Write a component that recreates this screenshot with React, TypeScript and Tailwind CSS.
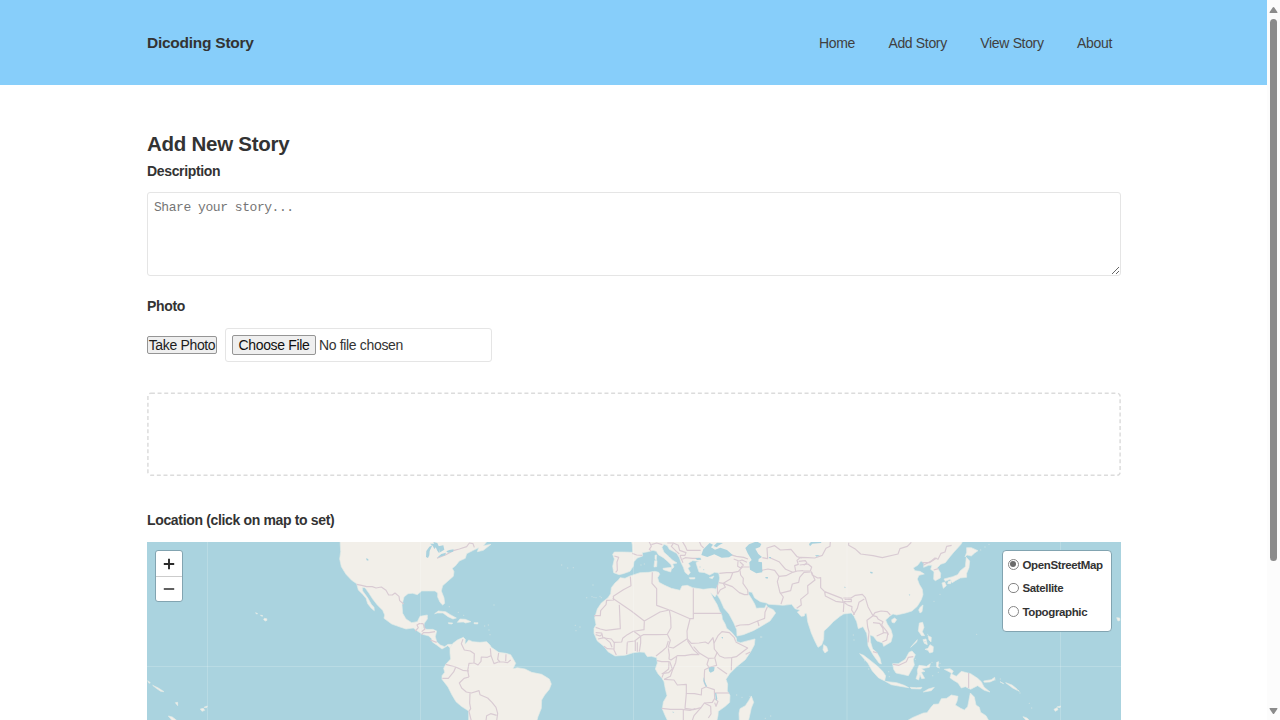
import React from "react";

// Coastline and border data: each part is a horizontal tile offset and "x,y" points inside that tile.
type Part = [number, string];

const A = 840;
const B = 1320;
const C = 1800;
const D = 2160;

function pts(parts: Part[]): string {
  return parts
    .map(([dx, s]) =>
      s
        .trim()
        .split(/\s+/)
        .map((p) => {
          const [x, y] = p.split(",").map(Number);
          return `${x + dx},${y}`;
        })
        .join(" ")
    )
    .join(" ");
}

const LAND: Part[][] = [
  // North and Central America
  [[A, "-240,15 -238,50 -241,72 -236,95 -222,118 -205,136 -190,146 -185,165 -172,178 -162,190 -157,206 -146,220 -137,227 -138,217 -146,208 -156,190 -163,180 -172,168 -173,158 -165,158 -153,175 -142,192 -128,210 -112,226 -106,240 -108,250 -85,267 -60,276 -42,282 -20,279 -5,290 8,298 26,303 35,311 37,321 50,330 66,342 75,337 83,332 92,340 97,328 84,328 74,335 61,330 50,320 46,305 50,288 38,283 20,283 10,279 13,265 22,252 22,240 0,244 -8,260 -25,263 -42,252 -52,235 -54,210 -48,186 -36,176 -22,175 -8,179 5,168 25,168 45,168 53,174 53,186 60,202 68,210 74,205 72,188 64,168 68,152 84,138 100,124 102,110 97,100 106,93 118,78 136,70 140,56 160,46 176,38 172,50 190,46 213,28 190,32 205,15"]],
  // South America
  [[A, "90,338 99,325 112,315 130,307 136,313 135,328 141,322 146,315 158,320 180,322 200,320 210,330 214,337 236,352 258,355 272,359 281,374 287,385 279,401 292,398 315,402 335,412 365,418 388,432 394,447 388,463 374,480 365,495 364,520 354,545 350,560 146,560 146,528 124,514 108,500 96,480 84,456 66,433 66,422 74,412 71,400 78,387 92,372 90,355"]],
  // Africa
  [[B, "120,128 135,130 150,123 180,113 206,112 225,109 236,112 239,118 233,128 237,142 254,151 274,160 300,166 306,153 322,151 338,158 370,163 396,160 408,162 411,176 405,186 392,173 400,190 411,208 418,226 426,242 427,252 436,268 440,280 455,292 469,309 470,320 482,323 504,317 525,312 523,330 512,350 496,374 470,395 449,416 438,433 443,447 442,468 450,481 449,502 436,514 415,529 414,542 410,560 264,560 256,543 247,522 250,501 261,482 256,462 252,440 246,430 234,416 226,402 232,384 230,368 214,364 202,365 193,352 178,351 160,353 135,361 105,363 84,350 73,335 52,318 42,295 42,280 48,269 44,248 52,222 64,204 84,188 92,176 94,158 105,144 116,134"]],
  // Europe and Asia
  [
    [B, "154,15 157,30 158,52 130,51 103,51 98,58 103,72 98,94 101,113 117,119 130,116 150,109 160,94 162,80 172,69 188,63 187,53 205,50 219,46 229,49 235,59 250,68 265,81 273,89 277,101 282,96 278,87 291,84 277,75 267,65 252,52 246,37 252,28 262,32 268,43 290,55 298,68 304,85 310,97 315,112 325,120 331,113 324,100 331,94 325,85 338,77 356,79 348,83 352,96 357,111 374,113 389,120 404,112 416,114 419,129 415,150 407,164 412,180 421,195 432,220 447,237 461,263 470,284 471,303 490,299 520,287 540,276 570,258 587,234 580,224 562,216 559,209 554,219 540,219 529,220 524,207 514,190 506,178 505,170 516,172 524,189 541,200 559,204 566,208 585,209 610,211"],
    [C, "155,208 165,221 180,226 172,231 183,244 193,243 195,235 200,236 203,260 214,294 224,317 234,337 245,330 251,313 252,288 266,275 280,260 300,244 311,237 334,234 342,244 350,260 355,281 369,275 380,295 383,315 384,332 393,349 401,362 417,384 424,387 420,369 410,352 398,342 392,322 390,300 400,304 411,318 428,324 431,334 453,321 458,302 453,284 442,267 437,255 449,244 459,237 470,240 497,234 516,228 532,214 544,194 549,179 547,163 538,148 532,132 537,121 553,117 540,109 525,107 520,99 533,91 543,78 552,83 551,97 566,91 576,91 572,103 582,110 581,133"],
    [D, "226,137 241,129 242,115 232,98 242,88 256,83 270,65 282,51 303,28 310,15"],
  ],
  // Mediterranean islands
  [[B, "249,100 276,97 272,111 250,104"]],
  [[B, "224,77 231,77 230,95 222,96"]],
  [[B, "225,61 230,60 229,75 225,73"]],
  [[B, "328,128 345,128 344,132 330,132"]],
  [[B, "388,128 402,123 397,131"]],
  // Caribbean
  [[A, "44,236 55,228 77,230 91,239 109,249 99,252 84,245 69,234 52,234"]],
  [[A, "112,262 120,252 136,253 153,260 137,264 130,261"]],
  [[A, "85,263 98,264 96,267 86,266"]],
  [[A, "162,263 174,263 173,267 162,266"]],
  // Madagascar
  [[B, "478,560 477,535 480,521 496,512 506,497 514,483 521,502 514,519 505,560"]],
  // Sri Lanka
  [[C, "251,329 260,335 264,347 255,354 249,345"]],
  // Sumatra
  [[C, "359,356 371,361 392,377 413,394 428,409 437,422 434,438 415,428 397,408 384,385"]],
  // Java and the lesser islands
  [[C, "436,439 450,441 470,443 493,451 506,458 480,454 454,449"]],
  [[C, "510,457 530,458 546,457 542,462 514,461"]],
  [[C, "550,471 565,462 583,457 574,467"]],
  // Borneo
  [[C, "458,386 475,386 496,373 507,352 516,348 526,359 520,374 523,390 514,406 505,422 486,418 468,414 461,403"]],
  // Sulawesi
  [[C, "532,405 537,391 560,394 571,386 568,397 545,401 555,409 544,412 554,430 545,431 540,419 536,435 528,431 533,416"]],
  // Philippines
  [[C, "538,264 548,262 552,277 547,290 554,302 545,302 535,288"]],
  [[C, "555,343 564,340 570,329 580,335 579,351 569,354 564,346"]],
  [[C, "549,314 558,312 562,329 553,325"]],
  [[C, "564,302 574,307 573,321 567,315"]],
  [[C, "512,337 532,314 530,321"]],
  // Taiwan and Hainan
  [[C, "541,216 549,210 546,230 540,234 536,225"]],
  [[C, "455,254 464,249 470,254 463,264 456,262"]],
  // Japan
  [[D, "320,38 334,38 354,47 344,54 334,63 321,60 315,66 320,52"]],
  [[D, "319,67 329,78 327,98 320,115 320,127 301,129 286,137 277,143 270,133 256,139 252,132 278,125 293,119 301,107 316,95"]],
  [[D, "246,144 254,141 259,152 250,160"]],
  [[D, "265,139 275,137 272,146 263,146"]],
  // New Guinea
  [[D, "253,403 270,401 280,408 275,417 289,424 304,409 332,416 353,430 364,440 372,456 390,471 373,466 353,452 341,458 332,463 316,455 304,459 294,444 279,435 270,428 274,414"]],
  [[D, "371,438 394,434 404,427 405,434 390,441 373,442"]],
  [[D, "230,382 236,380 234,394 239,399 230,396"]],
  [[D, "420,440 431,446 426,444"]],
  // Australia
  [[D, "137,560 157,548 190,534 201,533 213,517 221,508 236,507 244,491 260,490 274,480 294,484 291,499 286,510 302,520 313,525 323,515 331,474 343,486 348,510 358,517 362,532 378,542 388,560"]],
  // Hawaii and Pacific specks
  [[0, "373,250 380,251 381,256 376,258 371,254"]],
  [[0, "347,233 353,236 349,237"]],
  [[0, "362,240 369,243 363,243"]],
  [[0, "181,522 190,520 194,526 186,529"]],
  [[0, "192,517 202,513 200,518"]],
  [[0, "106,503 113,502 113,512"]],
  [[0, "85,543 97,546 110,556 99,560"]],
  [[0, "23,437 31,443 27,445"]],
  [[0, "38,451 55,459 72,470 62,469 49,460"]],
  [[D, "582,523 591,518 594,524 586,529"]],
  [[D, "591,516 602,513 600,518"]],
  [[D, "437,443 456,450 471,462 478,469 458,459"]],
  [[D, "489,545 501,549 512,560 498,556"]],
  [[D, "770,248 779,249 780,256 774,258"]],
];

const WATER: Part[][] = [
  // Black Sea
  [[B, "364,60 370,43 382,31 389,24 399,29 393,37 405,44 421,38 441,45 458,60 447,67 425,68 403,58 382,66"]],
  [[B, "401,33 411,23 429,24 417,31 410,37"]],
  [[B, "346,70 361,68 364,74 351,75"]],
  // Caspian Sea
  [[B, "496,39 507,28 530,19 544,27 540,36 526,41 535,57 546,66 536,72 535,80 546,82 547,112 529,115 510,104 508,82 515,75 503,55"]],
  [[C, "207,27 214,20 245,20 243,24 217,26 210,34"]],
  [[C, "225,61 240,60 230,65"]],
  [[C, "86,66 93,66 93,70 88,70"]],
  [[C, "76,126 84,126 83,131 77,130"]],
  [[C, "390,110 398,111 397,116 391,114"]],
  [[C, "506,178 511,179 509,182"]],
  [[C, "312,155 317,156 315,160"]],
  // Great Lakes
  [[A, "18,66 19,48 28,35 37,31 29,48 28,61 24,69"]],
  [[A, "30,26 44,26 55,34 70,31 73,44 58,53 60,42 48,36 43,42 38,32"]],
  [[A, "51,68 64,57 78,53 75,61"]],
  [[A, "79,49 88,45 101,43 99,50 84,53"]],
  [[A, "40,21 52,24 60,42 57,54 52,47"]],
  [[0, "678,70 685,72 685,77 680,76"]],
  // Lake Victoria and rift lakes
  [[B, "386,399 394,395 404,397 402,408 392,413 387,409"]],
  [[B, "371,426 374,438 381,454 378,456 370,438"]],
  [[B, "405,474 409,475 412,492 408,497"]],
  [[B, "424,306 429,306 428,312"]],
  [[B, "276,530 283,531 280,533"]],
];

const BORDERS: Part[][] = [
  // Americas
  [[0, "650,148 665,151 680,155 697,155 708,159 724,156 738,166 746,180 757,180 765,174 777,184 779,197 791,207"]],
  [[0, "826,288 835,278 831,270 837,266 849,266 855,282 845,290"]],
  [[0, "845,300 850,293 867,293 885,290"]],
  [[0, "871,315 890,322"]],
  [[A, "51,70 76,60 100,47 118,42 140,35 148,24 159,26 163,37"]],
  [[A, "129,313 124,326 133,345 151,348 163,356 162,384 147,385 143,407 147,426"]],
  [[A, "77,388 107,396 128,406 147,408"]],
  [[A, "67,430 85,430 101,411 107,397"]],
  [[A, "147,426 132,430 118,444 125,459 139,471 154,474 177,467 180,479 203,489 216,502 228,517 233,535 230,557"]],
  [[A, "150,475 149,505 152,521 147,529 154,558"]],
  [[A, "198,557 200,542 212,536 230,541"]],
  [[A, "163,384 174,390 183,379 184,366 202,367 213,362 211,340"]],
  [[A, "213,362 222,386 235,381 250,381 263,383 272,375"]],
  [[A, "236,354 233,373 240,381"]],
  [[A, "258,358 257,379"]],
  // Iberia and Europe
  [[B, "103,63 116,67 111,81 112,106 107,112"]],
  [[B, "157,55 170,60 187,61"]],
  [[B, "207,19 214,34 208,43 213,47"]],
  [[B, "214,29 230,24 247,29"]],
  [[B, "262,24 280,24 295,31 299,46 318,53 315,61 300,61"]],
  [[B, "280,25 274,34 289,49 298,57"]],
  [[B, "307,19 316,34 321,46 346,46 362,46"]],
  [[B, "307,73 316,68 337,70 357,70"]],
  [[B, "300,61 304,72 309,83"]],
  [[B, "358,19 363,31 371,39"]],
  [[B, "449,58 469,64 491,67 504,72"]],
  [[B, "461,72 477,78 486,75 501,82"]],
  [[B, "418,115 440,113 458,113 475,109 487,96 509,96"]],
  [[B, "474,79 473,94 482,99 490,90 480,81"]],
  [[B, "458,114 451,132 430,145 416,143"]],
  [[B, "480,106 482,120 490,130 489,145 503,165 504,178"]],
  [[B, "430,145 436,157 421,164 413,178"]],
  [[B, "430,145 457,155 478,173 493,179 505,179"]],
  [[B, "412,149 413,178"]],
  [[B, "467,274 480,270 506,269 533,258 537,273"]],
  [[B, "533,258 554,250 555,232 562,216"]],
  // Central and south Asia
  [[C, "65,106 84,102 104,106 117,124 112,140 120,173 130,186 123,207"]],
  [[C, "67,68 83,71 81,39 104,32 121,45 153,43 171,65 185,69"]],
  [[C, "90,68 117,80 137,103 158,112 172,108 190,107"]],
  [[C, "117,124 138,122 158,112"]],
  [[C, "120,175 152,167 157,147 176,142 179,127 192,112 212,111"]],
  [[C, "167,108 164,92 175,88 171,76 181,67 204,68 224,69 247,61 258,40 270,34 271,20"]],
  [[C, "190,108 211,108 215,96 204,87 179,90"]],
  [[C, "176,79 196,77 201,84 191,91"]],
  [[C, "214,110 217,120 233,129 242,128 242,158 254,170"]],
  [[C, "214,110 225,135 203,152 204,175 182,193 184,210 170,220"]],
  [[C, "254,170 277,179 306,190 310,202 287,199 256,183 254,170"]],
  [[C, "310,189 333,189 346,181 367,178 376,188 384,215 399,242"]],
  [[C, "314,193 334,193 334,200 312,200 310,231"]],
  [[C, "312,202 323,210 336,215 335,225 344,239"]],
  [[C, "340,240 352,220 357,202 373,192"]],
  [[C, "399,242 381,256 383,276 387,291 384,322"]],
  [[C, "399,242 405,233 423,228 442,230 451,240"]],
  [[C, "399,242 410,245 415,253 429,260 425,270 441,290 445,300"]],
  [[C, "399,263 419,265 429,280 430,294 410,303"]],
  [[C, "430,293 444,294 440,315 427,321"]],
  [[C, "399,350 412,354"]],
  [[C, "326,23 326,31 347,43 362,57 399,62 427,68 474,57 480,41 502,34 514,22"]],
  [[C, "547,83 568,83 590,69"]],
  [[D, "190,91 215,77 225,69 234,73 243,55 255,51 260,34 275,31"]],
  [[D, "221,105 235,101"]],
  [[D, "326,414 326,459"]],
  [[C, "459,388 477,391 499,380 505,367 520,365"]],
  // Africa
  [[B, "151,125 153,152 130,164 100,184 101,195 80,196 78,209 62,227 61,242 42,242"]],
  [[B, "98,190 154,228 193,258 240,231 268,225 230,211 230,161 216,145 217,112"]],
  [[B, "118,209 121,281 78,286 61,282 47,277"]],
  [[B, "340,160 340,235 425,235"]],
  [[B, "270,225 330,251 340,251 340,235"]],
  [[B, "268,225 272,248 273,278 262,298 231,299 190,299 183,303"]],
  [[B, "193,259 192,284 166,288 160,289 142,299 128,310 125,321 102,322 94,312 74,309"]],
  [[B, "330,252 321,288 322,311 280,339 265,336 271,316 262,298"]],
  [[B, "322,312 334,325 357,324 376,321 385,326 399,308 402,325"]],
  [[B, "402,325 414,302 426,290 448,293 463,308 467,320"]],
  [[B, "402,325 403,342 419,363 434,369 455,368 469,365 503,339 467,321"]],
  [[B, "455,368 454,406"]],
  [[B, "322,316 341,345 357,359 336,358 315,362 292,362 273,375 267,372 268,360 265,340"]],
  [[B, "341,335 359,355 384,370 404,369 412,351"]],
  [[B, "405,370 410,391 386,398 374,404 373,421 373,444 379,455"]],
  [[B, "387,397 381,388 386,372"]],
  [[B, "412,397 441,417"]],
  [[B, "379,455 365,461 364,480 344,476 319,475 319,448 292,450 282,435 252,433"]],
  [[B, "379,456 403,464 404,490 397,502 373,504 363,518 340,524 315,520 319,475"]],
  [[B, "245,520 271,523 306,523 330,526 346,521"]],
  [[B, "310,524 310,559"]],
  [[B, "363,518 342,542 336,559"]],
  [[B, "373,504 392,514 393,537 385,549"]],
  [[B, "403,474 447,474"]],
  [[B, "404,491 414,499 408,514 404,503"]],
  [[B, "231,377 245,380 267,380 266,402 251,414 246,428"]],
  [[B, "290,365 287,383 278,404 271,424 253,433"]],
  [[B, "269,379 277,402 266,413 245,416"]],
  [[B, "265,318 259,337 247,348 228,363"]],
  [[B, "182,304 182,324 178,350"]],
  [[B, "166,318 166,348"]],
  [[B, "172,322 172,350"]],
  [[B, "142,322 140,357"]],
  [[B, "142,321 164,318 182,304 163,290"]],
  [[B, "103,322 102,345 109,360"]],
  [[B, "102,342 82,341 72,334"]],
  [[B, "54,312 73,308 90,322 96,337"]],
  [[B, "47,293 65,294 69,309"]],
  [[B, "47,299 60,303 66,298"]],
  [[B, "497,358 511,351"]],
];

const SPECKS: Part[] = [
  [A, "425,90 443,99 460,98 519,150 516,185 528,188 540,184 466,271 480,276 468,287 205,270 207,285 210,299 194,273 88,215 115,232 131,241 222,210"],
  [B, "20,188 42,187 64,188 545,306 470,480 486,487 510,484 183,90 193,87 371,104 360,96"],
  [C, "62,306 76,550 92,543 340,300 342,315 600,385 563,298 448,425 446,410 374,377 386,402 555,320 526,373 595,412 578,422"],
  [D, "362,45 375,36 387,28 240,178 222,199 350,298 405,435 421,432 480,474 508,505 515,519 472,465 216,382"],
];

function WorldMap() {
  return (
    <svg viewBox="147 542 974 178" className="block h-full w-full" aria-hidden="true">
      <rect x="147" y="542" width="974" height="178" fill="#aad3df" />
      <g transform="translate(140 535) scale(0.33333)" strokeLinejoin="round">
        {LAND.map((s, i) => (
          <polygon key={i} points={pts(s)} fill="#f2efe9" stroke="#e4ebe7" strokeWidth="2" />
        ))}
        {BORDERS.map((s, i) => (
          <polyline key={i} points={pts(s)} fill="none" stroke="#d9cbd3" strokeWidth="3.5" />
        ))}
        {WATER.map((s, i) => (
          <polygon key={i} points={pts(s)} fill="#a9d2de" />
        ))}
        {SPECKS.map((s, i) =>
          pts([s])
            .split(" ")
            .map((p, j) => {
              const [x, y] = p.split(",").map(Number);
              return <circle key={`${i}-${j}`} cx={x} cy={y} r="2" fill="#c8dfe2" />;
            })
        )}
      </g>
      <g stroke="#ffffff" strokeOpacity="0.18">
        <path d="M207.5 542V720M420.5 542V720M633.5 542V720M847 542V720M1060.500 542V720M147 666.500H1121" />
      </g>
    </svg>
  );
}

function Layer({ label, checked }: { label: string; checked?: boolean }) {
  return (
    <label className="flex h-[23.5px] items-center gap-[4px]">
      <span className="relative -top-px flex size-[10.500px] shrink-0 items-center justify-center rounded-full border border-[#858585] bg-white">
        {checked && <span className="size-[6px] rounded-full bg-[#6b6b6b]" />}
      </span>
      <span className="text-[11.500px] leading-none font-bold tracking-[-0.370px] whitespace-nowrap">{label}</span>
    </label>
  );
}

export default function App() {
  return (
    <div className="flex h-[720px] w-[1280px] overflow-hidden bg-white font-['Liberation_Sans',Arial,sans-serif] text-[14px] tracking-[-0.340px] text-[#333333]">
      <div className="h-full w-[1267px]">
        <header className="flex h-[84.500px] items-center justify-between bg-[#87cefa] pr-[155px] pl-[147px]">
          <div className="text-[15.500px] font-bold tracking-[-0.250px]">Dicoding Story</div>
          <nav className="flex gap-[33.500px] pt-[2px] text-[#404040]">
            <a>Home</a>
            <a>Add Story</a>
            <a>View Story</a>
            <a>About</a>
          </nav>
        </header>

        <main className="flex flex-col pt-[45.500px] pr-[146px] pl-[147px]">
          <h1 className="h-[28px] text-[20.500px] leading-[28px] font-bold tracking-[-0.270px]">Add New Story</h1>
          <label className="mt-[3px] h-[20px] leading-[20px] font-bold">Description</label>
          <textarea
            placeholder="Share your story..."
            className="mt-[11px] block h-[83.500px] w-full resize rounded-[3px] border border-[#e5e5e5] px-[6px] pt-[7px] font-['Liberation_Mono',monospace] text-[13px] leading-[16px] tracking-[-0.450px] placeholder:text-[#757575]"
          />
          <label className="mt-[20.500px] h-[20px] leading-[20px] font-bold">Photo</label>
          <div className="mt-[12px] flex h-[34px] items-center gap-[8px]">
            <button className="flex h-[18px] w-[70px] items-center justify-center rounded-[2px] border border-[#959595] bg-[#efefef] whitespace-nowrap text-[#1c1c1c]">
              Take Photo
            </button>
            <div className="flex h-[34px] w-[267px] items-center gap-[3px] rounded-[3px] border border-[#e5e5e5] pl-[6px]">
              <button className="flex h-[20px] w-[84px] items-center justify-center rounded-[2px] border border-[#959595] bg-[#efefef] whitespace-nowrap text-[#111111]">
                Choose File
              </button>
              <span>No file chosen</span>
            </div>
          </div>
          <div className="mt-[30px] h-[84px]">
            <svg className="block" width="974" height="84" viewBox="0 0 974 84" fill="none" aria-hidden="true">
              <rect x="0.9" y="1.2" width="972.2" height="82" rx="3" stroke="#dcdcdc" strokeWidth="1.5" strokeDasharray="4 2.67" />
            </svg>
          </div>
          <label className="mt-[34px] h-[20px] leading-[20px] font-bold">Location (click on map to set)</label>
          <div className="relative mt-[12px] h-[178px] w-[974px]">
            <WorldMap />
            <div className="absolute top-[8px] left-[8px] flex h-[52px] w-[28px] flex-col rounded-[3px] border border-[#82a4b1] bg-white">
              <span className="flex h-[26px] items-center justify-center border-b border-[#cccccc]">
                <svg width="12" height="12" viewBox="0 0 12 12" stroke="#2b2b2b" strokeWidth="1.9">
                  <path d="M0.8 6H11.200M6 .8V11.200" />
                </svg>
              </span>
              <span className="flex h-[24px] items-center justify-center">
                <svg width="12" height="12" viewBox="0 0 12 12" stroke="#2b2b2b" strokeWidth="1.5">
                  <path d="M0.8 6H11.200" />
                </svg>
              </span>
            </div>
            <div className="absolute top-[8px] left-[855px] h-[82px] w-[110px] rounded-[4px] border border-[#82a4b1] bg-white pt-[2.500px] pl-[5px]">
              <Layer label="OpenStreetMap" checked />
              <Layer label="Satellite" />
              <Layer label="Topographic" />
            </div>
          </div>
        </main>
      </div>

      <div className="flex h-full w-[13px] flex-col items-center bg-[#fcfcfc]">
        <svg className="mt-[7px] block" width="9" height="6" viewBox="0 0 9 6" fill="#8b8b8b">
          <path d="M4.500 0Q5 0 5.300 .5L8.500 5.200Q8.700 6 8 6H1Q.3 6 .5 5.200L3.700 .5Q4 0 4.500 0Z" />
        </svg>
        <div className="mt-[6px] h-[542px] w-[7px] rounded-full bg-[#8b8b8b]" />
        <svg className="mt-[147px] block" width="9" height="6" viewBox="0 0 9 6" fill="#8b8b8b">
          <path d="M4.500 6Q5 6 5.300 5.500L8.500 .8Q8.700 0 8 0H1Q.3 0 .5 .8L3.700 5.500Q4 6 4.500 6Z" />
        </svg>
      </div>
    </div>
  );
}
